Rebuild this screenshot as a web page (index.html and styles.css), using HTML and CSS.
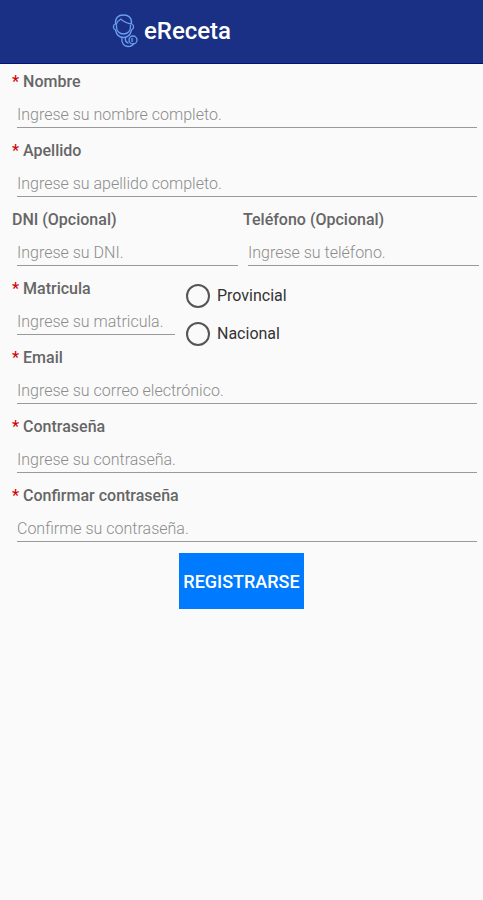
FILE: index.html
```html
<!DOCTYPE html>
<html lang="es">
<head>
<meta charset="utf-8">
<meta name="viewport" content="width=device-width, initial-scale=1">
<title>eReceta</title>
<link rel="stylesheet" href="styles.css">
</head>
<body>
<header class="bar">
  <svg class="logo" viewBox="0 0 26 36" aria-hidden="true">
    <path d="M3.500 11C3 5 6 2 11.500 2S20 5 19.500 11"/>
    <path d="M4 12c1-3 3-5 5-6 2 3 6 4 10 5"/>
    <path d="M4.500 12v2c0 4 3 7 7 7s7-3 7-7v-2"/>
    <path d="M3.500 11c-3 1-2.500 5 0 6 1 5 4 7.500 8 7.500s7-2.500 8-7.500c2.500-1 3-5 0-6"/>
    <path d="M10 25c-1 5 2 8.500 6 8.500 3 0 5-1 6-3.500M13.500 24.500c-.5 3 .5 5 3 5.500"/>
    <circle cx="21" cy="27" r="4"/>
    <path d="M20 25v4"/>
  </svg>
  <h1 class="brand">eReceta</h1>
</header>
<main>
  <form class="form">
    <div class="field">
      <label class="label" for="nombre"><span class="req">*</span> Nombre</label>
      <input class="input" id="nombre" type="text" placeholder="Ingrese su nombre completo.">
    </div>
    <div class="field">
      <label class="label" for="apellido"><span class="req">*</span> Apellido</label>
      <input class="input" id="apellido" type="text" placeholder="Ingrese su apellido completo.">
    </div>
    <div class="pair">
      <div class="field">
        <label class="label" for="dni">DNI (Opcional)</label>
        <input class="input" id="dni" type="text" placeholder="Ingrese su DNI.">
      </div>
      <div class="field">
        <label class="label" for="telefono">Teléfono (Opcional)</label>
        <input class="input" id="telefono" type="tel" placeholder="Ingrese su teléfono.">
      </div>
    </div>
    <div class="license">
      <div class="field">
        <label class="label" for="matricula"><span class="req">*</span> Matricula</label>
        <input class="input" id="matricula" type="text" placeholder="Ingrese su matricula.">
      </div>
      <div class="options" role="radiogroup" aria-label="Tipo de matricula">
        <label class="option"><input class="radio" type="radio" name="tipo">Provincial</label>
        <label class="option"><input class="radio" type="radio" name="tipo">Nacional</label>
      </div>
    </div>
    <div class="field">
      <label class="label" for="email"><span class="req">*</span> Email</label>
      <input class="input" id="email" type="email" placeholder="Ingrese su correo electrónico.">
    </div>
    <div class="field">
      <label class="label" for="clave"><span class="req">*</span> Contraseña</label>
      <input class="input" id="clave" type="password" placeholder="Ingrese su contraseña.">
    </div>
    <div class="field">
      <label class="label" for="clave2"><span class="req">*</span> Confirmar contraseña</label>
      <input class="input" id="clave2" type="password" placeholder="Confirme su contraseña.">
    </div>
    <button class="submit" type="submit">REGISTRARSE</button>
  </form>
</main>
</body>
</html>
```
FILE: styles.css
```css
* {
  box-sizing: border-box;
}

body {
  margin: 0;
  background: #fafafa;
  color: #666;
  font-family: Roboto, "Liberation Sans", sans-serif;
  font-size: 16px;
}

.bar {
  display: flex;
  align-items: center;
  justify-content: center;
  gap: 6px;
  height: 64px;
  padding: 0 140px 2px 0;
  border-bottom: 1px solid #00107c;
  background: #1a3085;
}

.logo {
  width: 26px;
  height: 36px;
  fill: none;
  stroke: #6d9ff0;
  stroke-width: 1.3;
}

.brand {
  margin: 0;
  color: #fff;
  font-size: 24px;
  font-weight: 500;
  line-height: 32px;
}

.form {
  display: flex;
  flex-direction: column;
  gap: 13px;
  padding: 8px 6px 0 12px;
}

.field {
  display: flex;
  flex-direction: column;
  min-width: 0;
}

.label {
  font-weight: 500;
  line-height: 20px;
}

.req {
  color: #d5000c;
}

.input {
  min-width: 0;
  height: 36px;
  margin-left: 5px;
  padding: 10px 0 0;
  border: 0;
  border-bottom: 1px solid #999;
  border-radius: 0;
  outline: 0;
  background: none;
  color: #333;
  font: inherit;
}

.input::placeholder {
  color: #8c8c8c;
  font-weight: 300;
  opacity: 1;
}

.pair {
  display: grid;
  grid-template-columns: 226px 1fr;
  gap: 5px;
  margin-right: -2px;
}

.license {
  display: grid;
  grid-template-columns: 163px 1fr;
  gap: 11px;
  height: 56px;
}

.options {
  display: flex;
  flex-direction: column;
  gap: 14px;
  padding-top: 5px;
}

.option {
  display: flex;
  align-items: center;
  gap: 7px;
  color: #333;
  line-height: 24px;
}

.radio {
  width: 24px;
  height: 24px;
  margin: 0;
  appearance: none;
  border: 2px solid #555;
  border-radius: 50%;
}

.radio:checked {
  background: radial-gradient(#007bff 0 5px, transparent 6px);
}

.submit {
  align-self: center;
  height: 56px;
  margin: -2px 6px 0 0;
  padding: 0 4px;
  border: 0;
  background: #007bff;
  color: #fff;
  font: inherit;
  font-size: 18px;
  font-weight: 500;
}
```
